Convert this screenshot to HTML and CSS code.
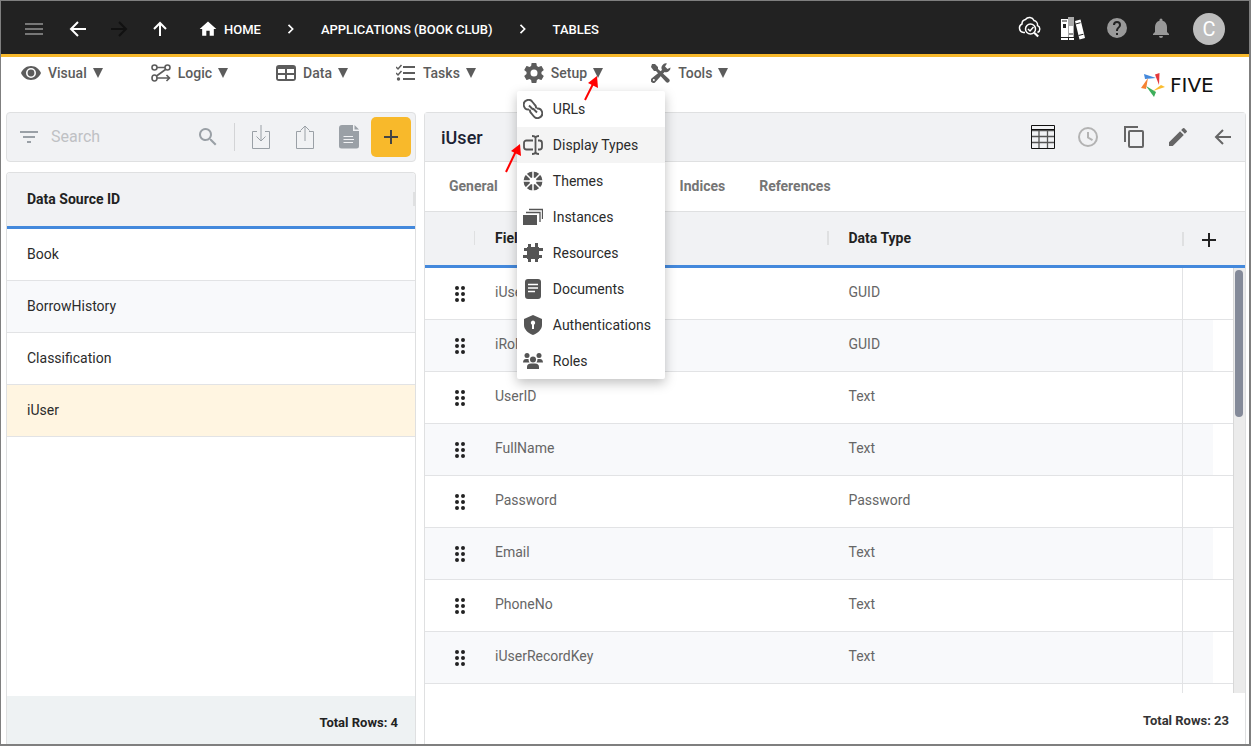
FILE: index.html
```html
<!DOCTYPE html>
<html lang="en">
<head>
    <meta charset="UTF-8">
    <meta name="viewport" content="width=device-width, initial-scale=1.0">
    <title>Five - Tables</title>
    <link rel="stylesheet" href="styles.css">
</head>
<body>
    <div class="app">
        <header class="topbar">
            <button class="icon-btn menu-btn" aria-label="Menu"><svg viewBox="0 0 24 24"><path d="M3 6h18v2H3zM3 11h18v2H3zM3 16h18v2H3z"/></svg></button>
            <button class="icon-btn" aria-label="Back"><svg viewBox="0 0 24 24"><path class="line" d="M20 12H5M12 5l-7 7 7 7"/></svg></button>
            <button class="icon-btn forward-btn" aria-label="Forward" disabled><svg viewBox="0 0 24 24"><path class="line" d="M4 12h15M12 5l7 7-7 7"/></svg></button>
            <button class="icon-btn" aria-label="Up"><svg viewBox="0 0 24 24"><path class="line" d="M12 19V6M6 12l6-6 6 6"/></svg></button>
            <nav class="breadcrumbs">
                <a href="#" class="home"><svg viewBox="0 0 24 24"><path d="M10 20v-6h4v6h5v-8h3L12 3 2 12h3v8z"/></svg>HOME</a>
                <svg viewBox="0 0 24 24"><path class="line" d="M9 7l5 5-5 5"/></svg>
                <a href="#">APPLICATIONS (BOOK CLUB)</a>
                <svg viewBox="0 0 24 24"><path class="line" d="M9 7l5 5-5 5"/></svg>
                <a href="#">TABLES</a>
            </nav>
            <div class="top-actions">
                <button class="icon-btn" aria-label="Inspect"><svg viewBox="0 1 24 24"><g class="outline"><path d="M8 17.500H6.500A4.500 4.500 0 0 1 5 9a4.500 4.500 0 0 1 3.500-4.500A5 5 0 0 1 17 5.500a4.500 4.500 0 0 1 3.500 5 3.800 3.800 0 0 1 0 7"/><circle cx="13.500" cy="14" r="5"/><path d="M11 14l2 2 3.500-4"/><path stroke-width="2.200" d="M17.200 17.800l4 3.700"/></g></svg></button>
                <button class="icon-btn" aria-label="Library"><svg viewBox="0 -1 24 24"><path d="M0 2h7v18H0zM14 4l5.500-1.500 4.500 18.500-5.500 1.500zM0 21h7v2H0zM8 21h5v2H8z"/><path d="M7 0h6v20H7z" fill="#aaa"/><path d="M8 9h4v11H8z" fill="#fff"/><path d="M2 7h3v4H2z" fill="#222"/><path d="M1 4h5M14.500 7l5-1.300M17.500 18.500l5-1.300M8 17h4" stroke="#222"/></svg></button>
                <button class="icon-btn dim" aria-label="Help"><svg viewBox="0 0 24 24"><path d="M12 2a10 10 0 1 0 0 20 10 10 0 0 0 0-20zm1 17h-2v-2h2zm2.070-7.750l-.9.920C13.450 12.900 13 13.500 13 15h-2v-.5c0-1.100.45-2.100 1.170-2.830l1.240-1.260c.37-.36.59-.86.59-1.410a2 2 0 1 0-4 0H8a4 4 0 1 1 8 0c0 .88-.36 1.680-.93 2.250z"/></svg></button>
                <button class="icon-btn dim" aria-label="Notifications"><svg viewBox="0 0 24 24"><path d="M12 22a2 2 0 0 0 2-2h-4a2 2 0 0 0 2 2zm6-6v-5c0-3.070-1.640-5.640-4.500-6.320V4a1.500 1.500 0 0 0-3 0v.68C7.630 5.360 6 7.920 6 11v5l-2 2v1h16v-1z"/></svg></button>
            </div>
            <button class="avatar">C</button>
        </header>

        <div class="menubar">
            <nav class="menus">
                <button class="menu"><svg class="icon" viewBox="0 0 20 20"><path fill-rule="evenodd" d="M10 3C5.500 3 1.700 5.800 0 10c1.700 4.200 5.500 7 10 7s8.300-2.800 10-7c-1.700-4.200-5.500-7-10-7zm0 2a5 5 0 1 1 0 10 5 5 0 0 1 0-10zm0 1.600a3.400 3.400 0 1 0 0 6.800 3.400 3.400 0 0 0 0-6.800z"/></svg>Visual<svg class="caret" viewBox="0 0 10 10"><path d="M0 0h10L5 10z"/></svg></button>
                <button class="menu"><svg class="icon" viewBox="0 0 20 20"><g fill="none" stroke="currentColor" stroke-width="1.600"><circle cx="3.500" cy="4.500" r="2.500"/><circle cx="16.500" cy="4.500" r="2.500"/><ellipse cx="3.500" cy="15" rx="2.500" ry="3"/><path d="M6 4.500h8M14.500 6.500L5.500 13M6 15h12M15.500 12l3 3-3 3"/></g></svg>Logic<svg class="caret" viewBox="0 0 10 10"><path d="M0 0h10L5 10z"/></svg></button>
                <button class="menu"><svg class="icon" viewBox="0 0 20 20"><path fill-rule="evenodd" d="M3 2h14a3 3 0 0 1 3 3v10a3 3 0 0 1-3 3H3a3 3 0 0 1-3-3V5a3 3 0 0 1 3-3zM2 6v4h7V6zm9 0v4h7V6zM2 12v4h7v-4zm9 0v4h7v-4z"/></svg>Data<svg class="caret" viewBox="0 0 10 10"><path d="M0 0h10L5 10z"/></svg></button>
                <button class="menu"><svg class="icon" viewBox="0 0 20 20"><path d="M7 3h12v2H7zM7 9h12v2H7zM7 15h12v2H7z"/><circle cx="2.500" cy="16" r="1.700"/><path d="M0 4l2 2 3.500-4M0 10l2 2 3.500-4" fill="none" stroke="currentColor" stroke-width="1.500"/></svg>Tasks<svg class="caret" viewBox="0 0 10 10"><path d="M0 0h10L5 10z"/></svg></button>
                <div class="menu-wrap">
                    <button class="menu" aria-expanded="true"><svg class="icon" viewBox="2 2 20 20"><path d="M19.430 12.980c.04-.32.07-.64.07-.98s-.03-.66-.07-.98l2.110-1.650c.19-.15.24-.42.12-.64l-2-3.460c-.12-.22-.39-.3-.61-.22l-2.490 1c-.52-.4-1.080-.73-1.690-.98l-.38-2.650A.49.490 0 0 0 14 2h-4c-.25 0-.46.180-.49.420l-.38 2.650c-.61.250-1.170.590-1.690.980l-2.490-1c-.23-.09-.49 0-.61.220l-2 3.460c-.13.220-.07.490.12.640l2.110 1.650c-.04.320-.07.650-.07.980s.03.660.07.980l-2.110 1.650c-.19.150-.24.420-.12.640l2 3.460c.12.220.39.300.61.220l2.490-1c.52.400 1.080.730 1.690.980l.38 2.650c.03.240.24.420.49.420h4c.25 0 .46-.18.49-.42l.38-2.650c.61-.25 1.170-.59 1.690-.98l2.490 1c.23.090.49 0 .61-.22l2-3.460c.12-.22.07-.49-.12-.64zM12 15.500a3.500 3.500 0 1 1 0-7 3.500 3.500 0 0 1 0 7z"/></svg>Setup<svg class="caret" viewBox="0 0 10 10"><path d="M0 0h10L5 10z"/></svg></button>
                    <div class="dropdown">
                        <button><svg viewBox="0 0 20 20"><g fill="none" stroke="currentColor" stroke-width="1.900"><path d="M6 10.500A4.800 4.800 0 1 1 9.500 3L12 6a4 4 0 0 1 1 3.500M6 6.500l4 4M14 9.500a4.800 4.800 0 1 1-3.500 7.500L8 14a4 4 0 0 1-1-3.500M14 13.500l-4-4"/></g></svg>URLs</button>
                        <button class="active"><svg viewBox="0 0 20 20"><g fill="none" stroke="currentColor" stroke-width="1.800"><path d="M10 14.500H3.500A2.500 2.500 0 0 1 1 12V8a2.500 2.500 0 0 1 2.500-2.500H10M15 5.500h1.500A2.500 2.500 0 0 1 19 8v4a2.500 2.500 0 0 1-2.500 2.500H15M12.500 3v14M9 1c2 0 3.500.5 3.500 2 0-1.500 1.500-2 3.500-2M9 19c2 0 3.500-.5 3.500-2 0 1.500 1.500 2 3.500 2"/></g></svg>Display Types</button>
                        <button><svg viewBox="0 0 20 20"><circle cx="10" cy="10" r="6.500" fill="none" stroke="currentColor" stroke-width="6"/><path d="M10 0v20M0 10h20M3 3l14 14M17 3L3 17" stroke="#fff" stroke-width="1.500"/></svg>Themes</button>
                        <button><svg viewBox="0 0 20 20"><path d="M0 8h14v10H0z"/><path d="M3 5.500h14V15M6 2.500h13.500V12" fill="none" stroke="currentColor" stroke-width="1.300"/></svg>Instances</button>
                        <button><svg viewBox="0 0 20 20"><path d="M4 4h12v12H4zM5 1h3v4H5zM12 0h3v5h-3zM5 15h3v4H5zM12 15h3v4h-3zM1 5h4v3H1zM0 12h5v3H0zM15 5h5v3h-5zM15 12h4v3h-4z"/></svg>Resources</button>
                        <button><svg viewBox="0 0 20 20"><rect x="2" width="16" height="20" rx="3"/><path d="M5 5.500h10M5 9h10M5 12.500h7" stroke="#fff" stroke-width="1.400"/></svg>Documents</button>
                        <button><svg viewBox="0 0 20 20"><path fill-rule="evenodd" d="M10 0l9 4v6c0 4.500-4 8-9 10-5-2-9-5.500-9-10V4zM10 5.500a2.300 2.300 0 0 0-1 4.300V14h2V9.800a2.300 2.300 0 0 0-1-4.300z"/></svg>Authentications</button>
                        <button><svg viewBox="0 0 20 20"><circle cx="4" cy="4.500" r="2.500"/><circle cx="16" cy="4.500" r="2.500"/><circle cx="10" cy="8.500" r="3"/><path d="M4 18v-2a4 3.500 0 0 1 4-3.500h4a4 3.500 0 0 1 4 3.500v2zM0 11.500c0-2.500 1.500-3.500 3-3.500h2.500c0 1.500.5 2.500 1 3.500zM20 11.500c0-2.500-1.500-3.500-3-3.500h-2.500c0 1.500-.5 2.500-1 3.500z"/></svg>Roles</button>
                    </div>
                    <svg class="pointer pointer-setup" viewBox="0 0 16 26"><path d="M1 25L10 7" stroke="red" stroke-width="2"/><path d="M13 1l1 12-10-5z" fill="red"/></svg>
                    <svg class="pointer pointer-types" viewBox="0 0 16 30"><path d="M1 29L11 8" stroke="red" stroke-width="2"/><path d="M15 1l1 12-10-5z" fill="red"/></svg>
                </div>
                <button class="menu"><svg class="icon" viewBox="0 0 20 20"><path d="M1 1l3 0 3 3v2l11 10a2 2 0 0 1-3 3L5 8H3L0 4z"/><path d="M19.500 4.500a4.500 4.500 0 0 1-6 4.500L4.500 19a2.400 2.400 0 0 1-4-3.500L11 7a4.500 4.500 0 0 1 5-6.500L14 3.500 16.500 6z"/><circle cx="2.800" cy="17" r="1" fill="#fff"/></svg>Tools<svg class="caret" viewBox="0 0 10 10"><path d="M0 0h10L5 10z"/></svg></button>
            </nav>
            <div class="logo">
                <svg viewBox="0 0 24 24"><path fill="#4489dc" d="M3 1l12 4-11 1z"/><path fill="#e5383b" d="M14 1.500L18.500 0 18 12z"/><path fill="#fbbc2e" d="M24 14l-4-2-8 6z"/><path fill="#3dae5b" d="M5 13l8 11 2-5z"/><path fill="#f58232" d="M7 5L0 15l5 1z"/></svg>
                <span>FIVE</span>
            </div>
        </div>

        <main class="content">
            <section class="side">
                <div class="toolbar">
                    <svg class="filter" viewBox="0 0 24 24"><path d="M3 6h18v2H3zM6 11h12v2H6zM10 16h4v2h-4z"/></svg>
                    <input type="text" placeholder="Search" aria-label="Search">
                    <svg class="search" viewBox="0 0 24 24"><path d="M15.500 14h-.79l-.28-.27A6.500 6.500 0 1 0 13.730 14.430l.27.28v.79l5 4.990L20.490 19zm-6 0a4.500 4.500 0 1 1 0-9 4.500 4.500 0 0 1 0 9z"/></svg>
                    <div class="tools">
                        <button class="icon-btn" aria-label="Import"><svg viewBox="0 0 24 24"><path class="thin" d="M8 6.500H3.500v17h17v-17H16M12 0v16M7.500 11.500L12 16l4.500-4.500"/></svg></button>
                        <button class="icon-btn" aria-label="Export"><svg viewBox="0 0 24 24"><path class="thin" d="M8 6.500H3.500v17h17v-17H16M12 16V1M7.500 5.500L12 1l4.500 4.500"/></svg></button>
                        <button class="icon-btn" aria-label="Report"><svg viewBox="0 0 24 24"><path d="M5 0h11v6h6v15a2.500 2.500 0 0 1-2.500 2.500h-15A2.500 2.500 0 0 1 2 21V3a3 3 0 0 1 3-3zM17.500 0L22 4.500h-4.500z"/><path d="M6.500 11.500H16M6.500 14.500H17M6.500 17.500H16" stroke="#f1f2f4" stroke-width="1.200"/></svg></button>
                    </div>
                    <button class="add-btn" aria-label="Add"><svg viewBox="0 0 24 24"><path d="M19 13h-6v6h-2v-6H5v-2h6V5h2v6h6z"/></svg></button>
                </div>
                <div class="list-panel">
                    <table class="sources">
                        <thead>
                            <tr><th><span>Data Source ID</span></th></tr>
                        </thead>
                        <tbody>
                            <tr><td>Book</td></tr>
                            <tr><td>BorrowHistory</td></tr>
                            <tr><td>Classification</td></tr>
                            <tr class="selected"><td>iUser</td></tr>
                        </tbody>
                    </table>
                    <footer>Total Rows: 4</footer>
                </div>
            </section>

            <section class="detail">
                <div class="detail-head">
                    <h1>iUser</h1>
                    <button class="icon-btn" aria-label="Grid"><svg viewBox="0 0 24 24"><path d="M1 5.500h22M1 11.500h22M1 17.500h22M8 5v18M16.500 5v18" fill="none" stroke="#555" stroke-width="1.300"/><path d="M.5.5h23v23H.5zM1 4.500h22" fill="none" stroke="#111"/></svg></button>
                    <button class="icon-btn faded" aria-label="History"><svg viewBox="0 0 24 24"><path class="line" d="M12 7v5.500l4.500 2.700"/><circle class="line" cx="12" cy="12" r="9"/></svg></button>
                    <button class="icon-btn" aria-label="Copy"><svg viewBox="-1 0 24 24"><path class="line" d="M3 17V2h13"/><rect class="line" x="7" y="6" width="14" height="16" rx="1"/></svg></button>
                    <button class="icon-btn" aria-label="Edit"><svg viewBox="0 0 24 24"><path d="M3 17.250V21h3.750L17.810 9.940l-3.750-3.750zM20.710 7.040a1 1 0 0 0 0-1.410l-2.340-2.340a1 1 0 0 0-1.410 0l-1.830 1.830 3.750 3.750z"/></svg></button>
                    <button class="icon-btn" aria-label="Close"><svg viewBox="0 0 24 24"><path class="line" d="M20 12H5M12 5l-7 7 7 7"/></svg></button>
                </div>
                <div class="tabs">
                    <div class="tab-group">
                        <button>General</button>
                    </div>
                    <div class="tab-group">
                        <button>Indices</button>
                        <button>References</button>
                    </div>
                </div>
                <div class="grid">
                    <table class="fields">
                        <colgroup><col class="col-drag"><col><col><col class="col-end"></colgroup>
                        <thead>
                            <tr>
                                <th><span></span></th>
                                <th><span>Field ID</span></th>
                                <th><span>Data Type</span></th>
                                <th><button class="icon-btn" aria-label="Add field"><svg viewBox="0 0 24 24"><path d="M19 13h-6v6h-2v-6H5v-2h6V5h2v6h6z"/></svg></button></th>
                            </tr>
                        </thead>
                        <tbody>
                            <tr><td><svg class="drag" viewBox="0 0 12 18"><path d="M3 3h0M9 3h0M3 9h0M9 9h0M3 15h0M9 15h0"/></svg></td><td>iUserKey</td><td>GUID</td><td></td></tr>
                            <tr><td><svg class="drag" viewBox="0 0 12 18"><path d="M3 3h0M9 3h0M3 9h0M9 9h0M3 15h0M9 15h0"/></svg></td><td>iRoleKey</td><td>GUID</td><td></td></tr>
                            <tr><td><svg class="drag" viewBox="0 0 12 18"><path d="M3 3h0M9 3h0M3 9h0M9 9h0M3 15h0M9 15h0"/></svg></td><td>UserID</td><td>Text</td><td></td></tr>
                            <tr><td><svg class="drag" viewBox="0 0 12 18"><path d="M3 3h0M9 3h0M3 9h0M9 9h0M3 15h0M9 15h0"/></svg></td><td>FullName</td><td>Text</td><td></td></tr>
                            <tr><td><svg class="drag" viewBox="0 0 12 18"><path d="M3 3h0M9 3h0M3 9h0M9 9h0M3 15h0M9 15h0"/></svg></td><td>Password</td><td>Password</td><td></td></tr>
                            <tr><td><svg class="drag" viewBox="0 0 12 18"><path d="M3 3h0M9 3h0M3 9h0M9 9h0M3 15h0M9 15h0"/></svg></td><td>Email</td><td>Text</td><td></td></tr>
                            <tr><td><svg class="drag" viewBox="0 0 12 18"><path d="M3 3h0M9 3h0M3 9h0M9 9h0M3 15h0M9 15h0"/></svg></td><td>PhoneNo</td><td>Text</td><td></td></tr>
                            <tr><td><svg class="drag" viewBox="0 0 12 18"><path d="M3 3h0M9 3h0M3 9h0M9 9h0M3 15h0M9 15h0"/></svg></td><td>iUserRecordKey</td><td>Text</td><td></td></tr>
                            <tr><td></td><td></td><td></td><td></td></tr>
                        </tbody>
                    </table>
                    <div class="scrollbar"><div class="thumb"></div></div>
                </div>
                <footer>Total Rows: 23</footer>
            </section>
        </main>
    </div>
</body>
</html>
```
FILE: styles.css
```css
* {
    box-sizing: border-box;
}

body {
    margin: 0;
    font-family: Roboto, sans-serif;
    font-size: 14px;
    color: #2b2b2b;
    background-color: white;
}

button {
    font-family: inherit;
    font-size: 14px;
    color: inherit;
    background: none;
    border: none;
    padding: 0;
    cursor: pointer;
}

svg {
    display: block;
    flex-shrink: 0;
    fill: currentColor;
}

.line {
    fill: none;
    stroke: currentColor;
    stroke-width: 2;
}

.thin {
    fill: none;
    stroke: currentColor;
    stroke-width: 1;
}

.app {
    display: flex;
    flex-direction: column;
    height: 100vh;
    border: 1px solid #7f7f7f;
    border-right-width: 2px;
    border-bottom-width: 2px;
    overflow: hidden;
}

.icon-btn {
    width: 24px;
    height: 24px;
    flex-shrink: 0;
}

.icon-btn svg {
    width: 24px;
    height: 24px;
}

/* top bar */
.topbar {
    display: flex;
    align-items: center;
    gap: 17px;
    height: 56px;
    flex-shrink: 0;
    padding: 3px 24px 0 21px;
    background-color: #222;
    border-bottom: 3px solid #f8b92b;
    color: white;
}

.menu-btn {
    color: #777;
    margin-right: 3px;
}

.forward-btn {
    color: #111;
}

.breadcrumbs {
    display: flex;
    align-items: center;
    gap: 20px;
    margin-left: 9px;
    font-size: 13px;
    font-weight: 500;
}

.breadcrumbs a {
    display: flex;
    align-items: center;
    gap: 6px;
    color: white;
    text-decoration: none;
}

.breadcrumbs svg {
    width: 20px;
    height: 20px;
}

.top-actions {
    display: flex;
    gap: 20px;
    margin-left: auto;
    padding-bottom: 3px;
}

.outline {
    fill: none;
    stroke: currentColor;
    stroke-width: 1.5;
}

.dim {
    color: #999;
}

.avatar {
    width: 32px;
    height: 32px;
    margin-left: 3px;
    border-radius: 50%;
    background-color: #bdbdbd;
    color: white;
    font-size: 20px;
}

/* menu bar */
.menubar {
    display: flex;
    justify-content: space-between;
    height: 55px;
    flex-shrink: 0;
    padding: 0 20px 0 13px;
}

.menus {
    display: flex;
    align-items: flex-start;
    gap: 34px;
}

.menu {
    display: flex;
    align-items: center;
    height: 34px;
    padding: 0 7px 2px;
    color: #5c5c5c;
    font-weight: 500;
}

.menu .icon {
    width: 20px;
    height: 20px;
    margin-right: 7px;
}

.menu .caret {
    width: 10px;
    height: 10px;
    margin-left: 6px;
}

.menu-wrap {
    position: relative;
}

.dropdown {
    position: absolute;
    z-index: 2;
    top: 34px;
    left: 0;
    width: 148px;
    background-color: white;
    border-radius: 2px;
    box-shadow: 0 4px 12px rgba(0, 0, 0, 0.25);
}

.dropdown button {
    display: flex;
    align-items: center;
    gap: 10px;
    width: 100%;
    height: 36px;
    padding: 0 6px;
}

.dropdown .active {
    background-color: #f4f4f4;
}

.dropdown svg {
    width: 20px;
    height: 20px;
    color: #555;
}

.pointer {
    position: absolute;
    z-index: 3;
}

.pointer-setup {
    top: 18px;
    left: 67px;
    width: 16px;
    height: 26px;
}

.pointer-types {
    top: 86px;
    left: -12px;
    width: 16px;
    height: 30px;
}

.logo {
    display: flex;
    align-items: center;
    gap: 5px;
    width: 88px;
    color: #111;
    font-size: 20px;
    font-family: "DejaVu Sans", sans-serif;
}

.logo svg {
    width: 24px;
    height: 24px;
}

/* panels */
.content {
    display: flex;
    gap: 8px;
    flex: 1;
    min-height: 0;
    padding: 0 3px 0 5px;
}

.side {
    display: flex;
    flex-direction: column;
    gap: 10px;
    flex: 1;
    min-width: 0;
}

.toolbar {
    display: flex;
    align-items: center;
    height: 50px;
    padding: 0 4px 0 10px;
    background-color: #f1f2f4;
    border: 1px solid #dfe0e1;
    border-radius: 4px;
    color: #9aa0a6;
}

.toolbar input {
    flex: 1;
    min-width: 0;
    margin-left: 10px;
    padding: 0 0 2px;
    border: none;
    outline: none;
    background: none;
    font-family: inherit;
    font-size: 16px;
}

.toolbar input::placeholder {
    color: #bfc1c4;
}

.filter,
.search {
    width: 24px;
    height: 24px;
}

.tools {
    display: flex;
    align-items: center;
    gap: 20px;
    height: 28px;
    margin: 0 10px 0 14px;
    padding-left: 14px;
    border-left: 1px solid #d3d4d6;
}

.add-btn {
    width: 40px;
    height: 40px;
    padding: 8px;
    border-radius: 5px;
    background-color: #f8b92b;
    color: #444;
}

.list-panel {
    display: flex;
    flex-direction: column;
    flex: 1;
    border: 1px solid #dfe0e1;
    border-bottom: none;
    border-radius: 4px 4px 0 0;
    overflow: hidden;
}

table {
    width: 100%;
    border-spacing: 0;
}

th {
    height: 56px;
    padding: 0 0 2px 20px;
    background-color: #f1f2f4;
    border-bottom: 3px solid #4489dc;
    color: #222;
    font-weight: 700;
    text-align: left;
}

th span {
    display: block;
    height: 14px;
    line-height: 14px;
    border-right: 2px solid #dfe0e1;
}

td {
    height: 52px;
    padding: 0 0 2px 20px;
    border-bottom: 1px solid #e2e3e5;
}

tbody tr:nth-child(even) {
    background-color: #f8f9fb;
}

.sources .selected {
    background-color: #fff5e1;
}

footer {
    font-size: 13px;
    font-weight: 700;
    text-align: right;
}

.side footer {
    height: 48px;
    line-height: 54px;
    margin-top: auto;
    padding-right: 17px;
    background-color: #eef2f3;
    color: #222;
}

.detail {
    display: flex;
    flex-direction: column;
    flex: 2;
    min-width: 0;
    border: 1px solid #dfe0e1;
    border-bottom: none;
    border-radius: 4px 4px 0 0;
}

.detail-head {
    display: flex;
    align-items: center;
    gap: 21px;
    height: 49px;
    flex-shrink: 0;
    padding: 0 10px 0 16px;
    background-color: #f1f2f4;
    border-bottom: 1px solid #dfe0e1;
    color: #666;
}

h1 {
    flex: 1;
    margin: 0;
    font-size: 18px;
    font-weight: 500;
    color: #1c2233;
}

.faded {
    color: #b3b3b3;
}

.tabs {
    display: flex;
    gap: 182px;
    height: 50px;
    flex-shrink: 0;
    padding: 0 0 2px 24px;
    border-bottom: 1px solid #dfe0e1;
}

.tab-group {
    display: flex;
    gap: 34px;
}

.tabs button {
    color: #757575;
    font-weight: 700;
}

.grid {
    position: relative;
    flex: 1;
    min-height: 0;
    overflow: hidden;
}

.fields {
    table-layout: fixed;
}

.col-drag {
    width: 50px;
}

.col-end {
    width: 63px;
}

.fields th:first-child span {
    width: 31px;
}

.fields th:nth-child(3) span {
    border: none;
}

.fields th:last-child {
    padding: 0;
}

.fields th .icon-btn {
    display: block;
    height: 14px;
    width: 100%;
    padding-left: 13px;
    border-left: 2px solid #dfe0e1;
}

.fields th svg {
    margin-top: -4px;
}

.fields td {
    padding-bottom: 4px;
    color: #666;
}

.fields td:first-child {
    padding: 0 0 0 29px;
}

.fields td:last-child {
    border-left: 1px solid #e2e3e5;
}

/* row tint stops short of the scrollbar */
.fields tr:nth-child(even) td:last-child {
    background: linear-gradient(to right, #f8f9fb 30px, white 30px);
}

.drag {
    width: 12px;
    height: 18px;
    stroke: #222;
    stroke-width: 4;
    stroke-linecap: round;
}

.scrollbar {
    position: absolute;
    top: 56px;
    right: 0;
    bottom: 0;
    width: 12px;
    padding: 2px 1px;
    background-color: #ebebeb;
    border-left: 1px solid #d8d8d8;
}

.thumb {
    width: 8px;
    height: 147px;
    border-radius: 4px;
    background-color: #848a99;
}

.detail footer {
    height: 51px;
    line-height: 56px;
    flex-shrink: 0;
    padding-right: 16px;
    color: #333;
}
```
